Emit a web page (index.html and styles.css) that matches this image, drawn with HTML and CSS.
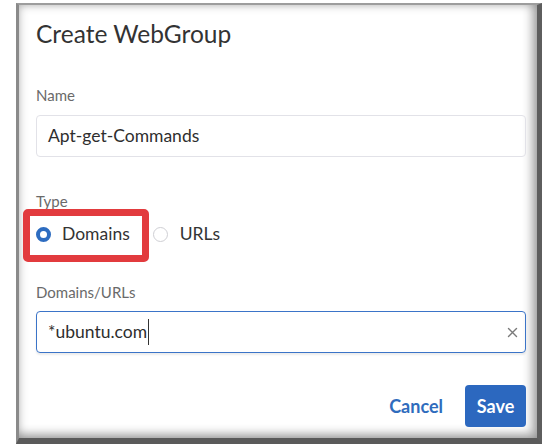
FILE: index.html
```html
<!DOCTYPE html>
<html lang="en">
<head>
<meta charset="utf-8">
<title>Create WebGroup</title>
<link rel="stylesheet" href="styles.css">
</head>
<body>
  <div class="frame">
    <form class="dialog">
      <h1 class="dialog-title">Create WebGroup</h1>

      <div class="field field-name">
        <label class="field-label">Name</label>
        <div class="text-input">Apt-get-Commands</div>
      </div>

      <div class="field field-type">
        <span class="field-label">Type</span>
        <div class="radio-group">
          <label class="radio-option radio-option-highlight">
            <span class="radio radio-checked"></span>
            <span class="radio-text">Domains</span>
          </label>
          <label class="radio-option">
            <span class="radio"></span>
            <span class="radio-text">URLs</span>
          </label>
        </div>
      </div>

      <div class="field field-domains">
        <label class="field-label">Domains/URLs</label>
        <div class="text-input text-input-focused">
          <span class="input-value">*ubuntu.com</span>
          <span class="caret"></span>
          <span class="clear-btn">
            <svg width="11" height="11" viewBox="0 0 11 11" aria-hidden="true">
              <path d="M1.5 1.5 L9.5 9.5 M9.5 1.5 L1.5 9.5" stroke="#7a7a7a" stroke-width="1.4" fill="none" stroke-linecap="round"/>
            </svg>
          </span>
        </div>
      </div>

      <div class="dialog-actions">
        <button type="button" class="btn btn-link">Cancel</button>
        <button type="button" class="btn btn-primary">Save</button>
      </div>
    </form>
  </div>
</body>
</html>
```

FILE: styles.css
```css
html, body {
  margin: 0;
  padding: 0;
  background: #ffffff;
  overflow: hidden;
}

body {
  font-family: Lato, "Open Sans", sans-serif;
  color: #333;
}

.frame {
  margin: 3px 0 0 16px;
  width: 526px;
  height: 441px;
  box-sizing: border-box;
  background: #fff;
  border-top: 2px solid #9d9d9d;
  border-left: 3px solid #8a8a8a;
  border-right: 5px solid #5e5e5e;
  border-bottom: 6px solid #5a5a5a;
  box-shadow:
    inset 0 0 10px rgba(0, 0, 0, 0.28),
    inset -6px -5px 10px rgba(0, 0, 0, 0.24);
  padding: 14px 11px 0 17px;
}

.dialog {
  display: flex;
  flex-direction: column;
}

.dialog-title {
  margin: 0;
  font-size: 24.5px;
  line-height: 30px;
  font-weight: 400;
  color: #333;
}

.field {
  display: flex;
  flex-direction: column;
}

.field-name {
  margin-top: 36px;
}

.field-type {
  margin-top: 34px;
}

.field-domains {
  margin-top: 36px;
}

.field-label {
  font-size: 15px;
  line-height: 20px;
  color: #6a6a6a;
}

.field-name .field-label {
  margin-bottom: 10px;
}

.field-domains .field-label {
  margin-bottom: 9px;
}

.text-input {
  display: flex;
  align-items: center;
  height: 42px;
  box-sizing: border-box;
  border: 1px solid #e2e2e8;
  border-radius: 4px;
  padding: 0 11px;
  font-size: 17.5px;
  line-height: 40px;
  color: #2e2e2e;
}

.text-input-focused {
  border: 1.5px solid #3b74c8;
  box-shadow: 0 2px 2px rgba(0, 0, 0, 0.08);
}

.caret {
  width: 1px;
  height: 26px;
  background: #333;
  margin-left: 1px;
}

.clear-btn {
  margin-left: auto;
  display: flex;
  align-items: center;
  margin-right: -4px;
}

.radio-group {
  display: flex;
  align-items: center;
  gap: 23px;
  margin-top: 11px;
  height: 24px;
}

.radio-option {
  position: relative;
  display: flex;
  align-items: center;
  gap: 11px;
  font-size: 17.5px;
  line-height: 24px;
  color: #333;
}

.radio-option + .radio-option {
  gap: 12px;
}

.radio {
  width: 15px;
  height: 15px;
  box-sizing: border-box;
  border-radius: 50%;
  border: 1px solid #cfcfd4;
  background: #fff;
}

.radio-checked {
  border: 4px solid #2d6cc0;
}

/* red annotation frame drawn over the selected option */
.radio-option-highlight::after {
  content: "";
  position: absolute;
  left: -13px;
  top: -13px;
  width: 126px;
  height: 53px;
  box-sizing: border-box;
  border: 7px solid #e23b3e;
  border-radius: 5px;
  pointer-events: none;
}

.dialog-actions {
  display: flex;
  justify-content: flex-end;
  align-items: center;
  gap: 22px;
  margin-top: 32px;
}

.btn {
  font-family: Lato, "Open Sans", sans-serif;
  font-size: 18px;
  font-weight: 700;
  border: none;
  border-radius: 4px;
  height: 42px;
  cursor: pointer;
}

.btn-link {
  background: transparent;
  color: #2f6cbd;
  padding: 0;
}

.btn-primary {
  background: #2c68bf;
  color: #fff;
  padding: 0 11px;
  min-width: 61px;
}
```
